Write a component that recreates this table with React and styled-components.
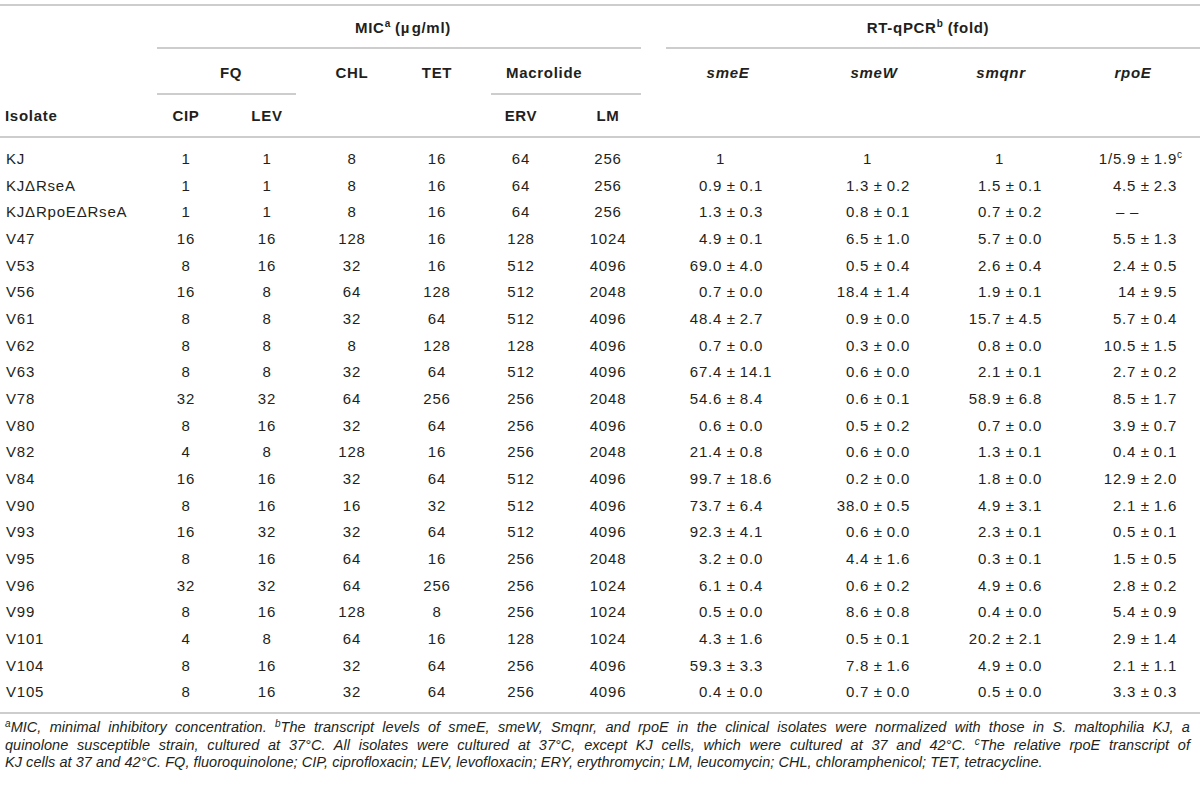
import React from "react";
import styled, { createGlobalStyle } from "styled-components";

const LINE = "#cdcdcd";
const INK = "#231f20";

const GlobalStyle = createGlobalStyle`
  html, body { margin: 0; padding: 0; background: #ffffff; }
  body {
    font-family: "Liberation Sans", Arial, Helvetica, sans-serif;
    color: ${INK};
  }
`;

const Page = styled.div`
  width: 1200px;
  padding-top: 4px;
`;

const Table = styled.table`
  width: 1200px;
  table-layout: fixed;
  border-collapse: collapse;
  border-spacing: 0;
  border-top: 2px solid ${LINE};
  border-bottom: 2px solid ${LINE};
  font-size: 15px;
  letter-spacing: 0.8px;
`;

const HeadRow = styled.tr`
  height: ${(p) => p.$h}px;
`;

const Th = styled.th`
  padding: 0 0 0 ${(p) => p.$pl || 0}px;
  font-weight: 700;
  letter-spacing: 0.7px;
  text-align: ${(p) => p.$align || "center"};
  vertical-align: middle;
  white-space: nowrap;
  border-bottom: ${(p) => (p.$rule ? `2px solid ${LINE}` : "none")};
`;

const SpanTh = styled(Th)`
  background-image: linear-gradient(${LINE}, ${LINE});
  background-repeat: no-repeat;
  background-size: calc(100% - ${(p) => p.$l + p.$r}px) 2px;
  background-position: ${(p) => p.$l}px 100%;
`;

const Gene = styled.span`
  font-style: italic;
`;

const Micro = styled.span`
  margin-right: 1.5px;
`;

const Sup = styled.sup`
  font-size: 10px;
  line-height: 0;
  vertical-align: 6px;
  letter-spacing: 0;
`;

const BodyRow = styled.tr`
  &:first-child td {
    padding-top: 8px;
  }
  &:last-child td {
    padding-bottom: 6px;
  }
`;

const Td = styled.td`
  padding: 0;
  line-height: 26.67px;
  text-align: center;
  white-space: nowrap;
`;

const NameTd = styled(Td)`
  text-align: left;
  padding-left: 6px;
`;

const NumTd = styled(Td)`
  padding-left: ${(p) => p.$shift * 2}px;
`;

const Pm = styled.div`
  display: grid;
  grid-template-columns: 1fr auto 1fr;
  align-items: baseline;
`;

const PmLeft = styled.span`
  justify-self: end;
  margin-right: ${(p) => (p.$solo ? -3 : 0)}px;
`;

const PmSign = styled.span`
  padding: 0 4px 0 4.6px;
  visibility: ${(p) => (p.$hidden ? "hidden" : "visible")};
`;

const PmRight = styled.span`
  justify-self: start;
`;

const Foot = styled.div`
  padding: 5px 10px 0 5px;
  font-size: 14.5px;
  line-height: 17.5px;
  font-style: italic;
  letter-spacing: 0.05px;
`;

const FootLine = styled.div`
  text-align: ${(p) => (p.$justify ? "justify" : "left")};
  text-align-last: ${(p) => (p.$justify ? "justify" : "left")};
  white-space: ${(p) => (p.$justify ? "normal" : "nowrap")};
`;

const FootSup = styled.sup`
  font-size: 10px;
  line-height: 0;
  vertical-align: 5px;
`;

const COLS = [150, 72, 90, 80, 90, 78, 96, 144, 148, 106, 146];

const rows = [
  ["KJ", "1", "1", "8", "16", "64", "256", "1", "1", "1", "1/5.9 ± 1.9^c"],
  ["KJΔRseA", "1", "1", "8", "16", "64", "256", "0.9 ± 0.1", "1.3 ± 0.2", "1.5 ± 0.1", "4.5 ± 2.3"],
  ["KJΔRpoEΔRseA", "1", "1", "8", "16", "64", "256", "1.3 ± 0.3", "0.8 ± 0.1", "0.7 ± 0.2", "– –"],
  ["V47", "16", "16", "128", "16", "128", "1024", "4.9 ± 0.1", "6.5 ± 1.0", "5.7 ± 0.0", "5.5 ± 1.3"],
  ["V53", "8", "16", "32", "16", "512", "4096", "69.0 ± 4.0", "0.5 ± 0.4", "2.6 ± 0.4", "2.4 ± 0.5"],
  ["V56", "16", "8", "64", "128", "512", "2048", "0.7 ± 0.0", "18.4 ± 1.4", "1.9 ± 0.1", "14 ± 9.5"],
  ["V61", "8", "8", "32", "64", "512", "4096", "48.4 ± 2.7", "0.9 ± 0.0", "15.7 ± 4.5", "5.7 ± 0.4"],
  ["V62", "8", "8", "8", "128", "128", "4096", "0.7 ± 0.0", "0.3 ± 0.0", "0.8 ± 0.0", "10.5 ± 1.5"],
  ["V63", "8", "8", "32", "64", "512", "4096", "67.4 ± 14.1", "0.6 ± 0.0", "2.1 ± 0.1", "2.7 ± 0.2"],
  ["V78", "32", "32", "64", "256", "256", "2048", "54.6 ± 8.4", "0.6 ± 0.1", "58.9 ± 6.8", "8.5 ± 1.7"],
  ["V80", "8", "16", "32", "64", "256", "4096", "0.6 ± 0.0", "0.5 ± 0.2", "0.7 ± 0.0", "3.9 ± 0.7"],
  ["V82", "4", "8", "128", "16", "256", "2048", "21.4 ± 0.8", "0.6 ± 0.0", "1.3 ± 0.1", "0.4 ± 0.1"],
  ["V84", "16", "16", "32", "64", "512", "4096", "99.7 ± 18.6", "0.2 ± 0.0", "1.8 ± 0.0", "12.9 ± 2.0"],
  ["V90", "8", "16", "16", "32", "512", "4096", "73.7 ± 6.4", "38.0 ± 0.5", "4.9 ± 3.1", "2.1 ± 1.6"],
  ["V93", "16", "32", "32", "64", "512", "4096", "92.3 ± 4.1", "0.6 ± 0.0", "2.3 ± 0.1", "0.5 ± 0.1"],
  ["V95", "8", "16", "64", "16", "256", "2048", "3.2 ± 0.0", "4.4 ± 1.6", "0.3 ± 0.1", "1.5 ± 0.5"],
  ["V96", "32", "32", "64", "256", "256", "1024", "6.1 ± 0.4", "0.6 ± 0.2", "4.9 ± 0.6", "2.8 ± 0.2"],
  ["V99", "8", "16", "128", "8", "256", "1024", "0.5 ± 0.0", "8.6 ± 0.8", "0.4 ± 0.0", "5.4 ± 0.9"],
  ["V101", "4", "8", "64", "16", "128", "1024", "4.3 ± 1.6", "0.5 ± 0.1", "20.2 ± 2.1", "2.9 ± 1.4"],
  ["V104", "8", "16", "32", "64", "256", "4096", "59.3 ± 3.3", "7.8 ± 1.6", "4.9 ± 0.0", "2.1 ± 1.1"],
  ["V105", "8", "16", "32", "64", "256", "4096", "0.4 ± 0.0", "0.7 ± 0.0", "0.5 ± 0.0", "3.3 ± 0.3"],
];

/* horizontal offset of the ± sign from the column centre, per gene column */
const SHIFTS = [3, 4, 9, 18];

function Side({ text }) {
  const m = text.match(/^(.*)\^(.)$/);
  if (!m) return text;
  return (
    <>
      {m[1]}
      <Sup>{m[2]}</Sup>
    </>
  );
}

function PlusMinus({ value, shift }) {
  const parts = value.split(" ± ");
  const solo = parts.length < 2;
  return (
    <NumTd $shift={shift}>
      <Pm>
        <PmLeft $solo={solo}>
          <Side text={parts[0]} />
        </PmLeft>
        <PmSign $hidden={solo}>±</PmSign>
        <PmRight>{solo ? null : <Side text={parts[1]} />}</PmRight>
      </Pm>
    </NumTd>
  );
}

export default function App() {
  return (
    <Page>
      <GlobalStyle />
      <Table>
        <colgroup>
          {COLS.map((w, i) => (
            <col key={i} style={{ width: w }} />
          ))}
        </colgroup>
        <thead>
          <HeadRow $h={44}>
            <Th />
            <SpanTh colSpan={6} $l={7} $r={15}>
              MIC<Sup>a</Sup> (<Micro>µ</Micro>g/ml)
            </SpanTh>
            <SpanTh colSpan={4} $l={10} $r={0}>
              RT-qPCR<Sup>b</Sup> (fold)
            </SpanTh>
          </HeadRow>
          <HeadRow $h={46}>
            <Th />
            <SpanTh colSpan={2} $l={7} $r={16}>
              FQ
            </SpanTh>
            <Th>CHL</Th>
            <Th>TET</Th>
            <SpanTh colSpan={2} $l={9} $r={15} $align="left" $pl={24}>
              Macrolide
            </SpanTh>
            <Th>
              <Gene>smeE</Gene>
            </Th>
            <Th>
              <Gene>smeW</Gene>
            </Th>
            <Th>
              <Gene>smqnr</Gene>
            </Th>
            <Th $pl={12}>
              <Gene>rpoE</Gene>
            </Th>
          </HeadRow>
          <HeadRow $h={42}>
            <Th $rule $align="left" $pl={5}>
              Isolate
            </Th>
            <Th $rule>CIP</Th>
            <Th $rule>LEV</Th>
            <Th $rule />
            <Th $rule />
            <Th $rule>ERV</Th>
            <Th $rule>LM</Th>
            <Th $rule />
            <Th $rule />
            <Th $rule />
            <Th $rule />
          </HeadRow>
        </thead>
        <tbody>
          {rows.map((r) => (
            <BodyRow key={r[0]}>
              <NameTd>{r[0]}</NameTd>
              {r.slice(1, 7).map((v, i) => (
                <Td key={i}>{v}</Td>
              ))}
              {r.slice(7).map((v, i) => (
                <PlusMinus key={i} value={v} shift={SHIFTS[i]} />
              ))}
            </BodyRow>
          ))}
        </tbody>
      </Table>
      <Foot>
        <FootLine $justify>
          <FootSup>a</FootSup>MIC, minimal inhibitory concentration. <FootSup>b</FootSup>The transcript levels of smeE,
          smeW, Smqnr, and rpoE in the clinical isolates were normalized with those in S. maltophilia KJ, a
        </FootLine>
        <FootLine $justify>
          quinolone susceptible strain, cultured at 37°C. All isolates were cultured at 37°C, except KJ cells, which
          were cultured at 37 and 42°C. <FootSup>c</FootSup>The relative rpoE transcript of
        </FootLine>
        <FootLine>
          KJ cells at 37 and 42°C. FQ, fluoroquinolone; CIP, ciprofloxacin; LEV, levofloxacin; ERY, erythromycin; LM,
          leucomycin; CHL, chloramphenicol; TET, tetracycline.
        </FootLine>
      </Foot>
    </Page>
  );
}
